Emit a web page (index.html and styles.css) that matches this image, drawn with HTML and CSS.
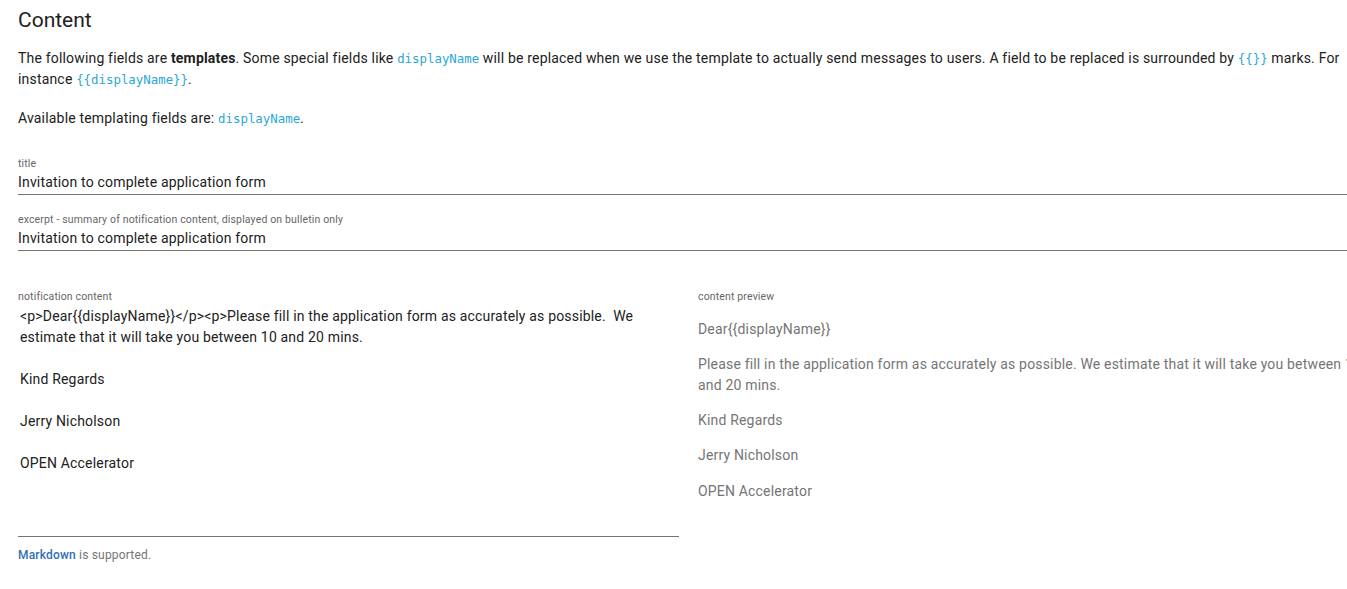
FILE: index.html
```html
<!DOCTYPE html>
<html lang="en">
<head>
<meta charset="utf-8">
<title>Content</title>
<link rel="stylesheet" href="styles.css">
</head>
<body>
<div class="page">
  <h2 class="heading">Content</h2>
  <p class="intro">The following fields are <strong>templates</strong>. Some special fields like <code>displayName</code> will be replaced when we use the template to actually send messages to users. A field to be replaced is surrounded by <code>{{}}</code> marks. For instance <code>{{displayName}}</code>.</p>
  <p class="intro">Available templating fields are: <code>displayName</code>.</p>

  <div class="field">
    <label class="field-label">title</label>
    <input class="field-input" type="text" value="Invitation to complete application form">
  </div>
  <div class="field field-second">
    <label class="field-label">excerpt - summary of notification content, displayed on bulletin only</label>
    <input class="field-input" type="text" value="Invitation to complete application form">
  </div>

  <div class="columns">
    <div class="col">
      <label class="field-label">notification content</label>
      <textarea class="content-area"><p>Dear{{displayName}}</p><p>Please fill in the application form as accurately as possible.  We estimate that it will take you between 10 and 20 mins.

Kind Regards

Jerry Nicholson

OPEN Accelerator</textarea>
      <div class="hint"><a class="hint-link">Markdown</a> is supported.</div>
    </div>
    <div class="col">
      <label class="field-label">content preview</label>
      <div class="preview">
        <p>Dear{{displayName}}</p>
        <p>Please fill in the application form as accurately as possible. We estimate that it will take you between 10 and 20 mins.</p>
        <p>Kind Regards</p>
        <p>Jerry Nicholson</p>
        <p>OPEN Accelerator</p>
      </div>
    </div>
  </div>
</div>
</body>
</html>
```

FILE: styles.css
```css
html, body {
  margin: 0;
  padding: 0;
  background: #fff;
  overflow: hidden;
}
body {
  font-family: Roboto, "Liberation Sans", Arial, sans-serif;
  color: #212121;
  font-size: 14px;
}
.page {
  width: 1341px;
  padding: 0 18px;
  letter-spacing: 0.18px;
}
.heading {
  margin: 0;
  padding-top: 6px;
  font-size: 21px;
  font-weight: 400;
  line-height: 28px;
  color: #212121;
  letter-spacing: 0;
}
.intro {
  margin: 14px 0 18px;
  line-height: 21px;
}
.intro + .intro {
  margin-top: 0;
}
.intro strong {
  font-weight: 700;
}
code {
  font-family: "DejaVu Sans Mono", "Liberation Mono", monospace;
  font-size: 12.4px;
  color: #2aa7d6;
  letter-spacing: 0;
}
.field {
  display: flex;
  flex-direction: column;
  margin-top: 26px;
}
.field-second {
  margin-top: 16px;
}
.field-label {
  display: block;
  font-size: 10.5px;
  line-height: 17px;
  color: #666;
  letter-spacing: 0.15px;
}
.field-input {
  font-family: inherit;
  font-size: 14px;
  letter-spacing: 0.18px;
  color: #212121;
  line-height: 20px;
  height: 23px;
  box-sizing: border-box;
  padding: 0 0 2px;
  margin: 0;
  border: none;
  border-bottom: 1px solid #757575;
  outline: none;
  background: transparent;
}
.columns {
  display: grid;
  grid-template-columns: 661px 676px;
  column-gap: 19px;
  margin-top: 39px;
}
.col {
  display: flex;
  flex-direction: column;
}
.col .field-label {
  line-height: 14px;
}
.content-area {
  font-family: inherit;
  font-size: 14px;
  letter-spacing: 0.18px;
  line-height: 21px;
  color: #212121;
  height: 232px;
  box-sizing: border-box;
  margin: 1px 0 0;
  padding: 1px 2px;
  border: none;
  border-bottom: 1px solid #757575;
  resize: none;
  outline: none;
  overflow: hidden;
  background: transparent;
}
.hint {
  margin-top: 10px;
  font-size: 12px;
  line-height: 16px;
  color: #757575;
}
.hint-link {
  color: #2f6fb8;
  font-weight: 500;
}
.preview {
  color: #757575;
  line-height: 21px;
}
.preview p {
  margin: 14px 0 0;
}
.preview p:first-child {
  margin-top: 14.5px;
}
.preview p:last-child {
  margin-top: 15px;
}
```
